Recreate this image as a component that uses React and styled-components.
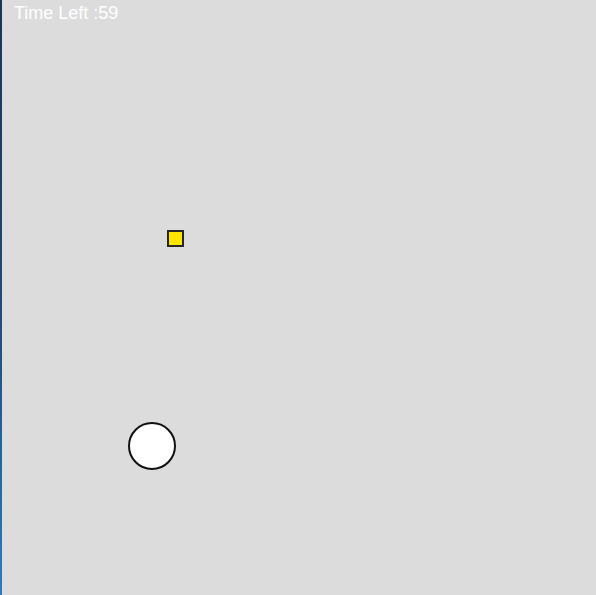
import React from 'react';
import styled, { createGlobalStyle } from 'styled-components';

const GlobalStyle = createGlobalStyle`
  html, body {
    margin: 0;
    padding: 0;
    height: 100%;
    overflow: hidden;
  }
  #root {
    height: 100%;
  }
`;

const Screen = styled.div`
  display: flex;
  width: 100vw;
  height: 100vh;
  font-family: 'Liberation Sans', Arial, sans-serif;
`;

const Edge = styled.div`
  width: 2px;
  flex-shrink: 0;
  background: linear-gradient(to bottom, #173656 0%, #1d4a78 50%, #2a7cc0 100%);
`;

// game field - objects are placed by their coordinates on it
const Field = styled.div`
  position: relative;
  flex: 1;
  background: #dcdcdc;
`;

const Timer = styled.div`
  padding: 3px 0 0 12px;
  font-size: 18px;
  color: #ffffff;
`;

const Coin = styled.div`
  position: absolute;
  left: ${(p) => p.x}px;
  top: ${(p) => p.y}px;
  width: 13px;
  height: 13px;
  background: #ffe600;
  border: 2px solid #262626;
`;

const Ball = styled.div`
  position: absolute;
  left: ${(p) => p.x}px;
  top: ${(p) => p.y}px;
  width: 44px;
  height: 44px;
  border-radius: 50%;
  background: #ffffff;
  border: 2px solid #111111;
`;

const App = () => {
  const timeLeft = 59;

  return (
    <>
      <GlobalStyle />
      <Screen>
        <Edge />
        <Field>
          <Timer>Time Left :{timeLeft}</Timer>
          <Coin x={165} y={230} />
          <Ball x={126} y={422} />
        </Field>
      </Screen>
    </>
  );
};

export default App;
